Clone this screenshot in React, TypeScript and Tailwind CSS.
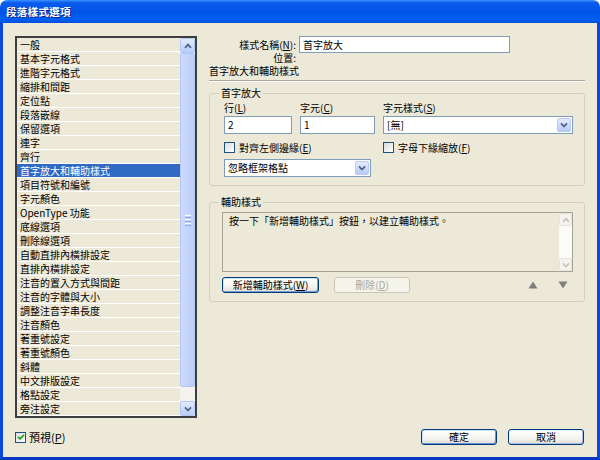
import React from "react";

const items = [
  "一般",
  "基本字元格式",
  "進階字元格式",
  "縮排和間距",
  "定位點",
  "段落嵌線",
  "保留選項",
  "連字",
  "齊行",
  "首字放大和輔助樣式",
  "項目符號和編號",
  "字元顏色",
  "OpenType 功能",
  "底線選項",
  "刪除線選項",
  "自動直排內橫排設定",
  "直排內橫排設定",
  "注音的置入方式與間距",
  "注音的字體與大小",
  "調整注音字串長度",
  "注音顏色",
  "著重號設定",
  "著重號顏色",
  "斜體",
  "中文排版設定",
  "格點設定",
  "旁注設定",
];

function U({ children }: { children: React.ReactNode }) {
  return <span className="underline underline-offset-[1px]">{children}</span>;
}

function Chevron({ up, color }: { up?: boolean; color: string }) {
  return (
    <svg width="8" height="6" viewBox="0 0 8 6">
      <path
        d={up ? "M1 4.8 L4 1.6 L7 4.8" : "M1 1.4 L4 4.6 L7 1.4"}
        fill="none"
        stroke={color}
        strokeWidth="1.7"
      />
    </svg>
  );
}

function Checkbox({ checked }: { checked?: boolean }) {
  return (
    <span className="flex h-[11px] w-[11px] shrink-0 items-center justify-center border border-[#1C5180] bg-[linear-gradient(135deg,#DCDCD7,#FFFFFF)]">
      {checked && (
        <svg width="8" height="8" viewBox="0 0 8 8">
          <path d="M1 3.8 L3.1 5.9 L7 1.8" fill="none" stroke="#21A121" strokeWidth="1.7" />
        </svg>
      )}
    </span>
  );
}

function Combo({ text, width }: { text: string; width: string }) {
  return (
    <div className={`flex h-[18px] items-center border border-[#7F9DB9] bg-white pl-[3px] ${width}`}>
      <span className="flex-1 leading-[16px]">{text}</span>
      <span className="m-[1px] flex h-[14px] w-[14px] items-center justify-center rounded-[2px] border border-[#B8CAF4] bg-[linear-gradient(to_bottom,#E4ECFE,#B7CAF8)]">
        <Chevron color="#4D6185" />
      </span>
    </div>
  );
}

function ScrollBtn({ up }: { up?: boolean }) {
  return (
    <div className="flex h-[15px] w-[15px] shrink-0 items-center justify-center rounded-[2px] border border-[#B4C8F6] bg-[linear-gradient(to_bottom,#E2EAFE,#BBCDF8)]">
      <Chevron up={up} color="#4D6185" />
    </div>
  );
}

function DisabledScrollBtn({ up }: { up?: boolean }) {
  return (
    <div className="flex h-[13px] w-full shrink-0 items-center justify-center rounded-[2px] border border-[#E6E4DA] bg-[#F4F3EE]">
      <Chevron up={up} color="#C6C5BE" />
    </div>
  );
}

function Triangle({ up }: { up?: boolean }) {
  return (
    <svg width="10" height="8" viewBox="0 0 10 8">
      <path d={up ? "M5 0.5 L9.5 7.5 L0.5 7.5 Z" : "M0.5 0.5 L9.5 0.5 L5 7.5 Z"} fill="#7E7E7E" />
    </svg>
  );
}

export default function App() {
  return (
    <div className="flex h-[460px] w-[600px] flex-col bg-white text-[10px] text-black [font-family:'Noto_Sans_CJK_TC','Noto_Sans_CJK_SC',sans-serif]">
      {/* Title bar */}
      <div className="flex h-[23px] shrink-0 items-center rounded-t-[7px] bg-[linear-gradient(to_bottom,#3C92FF_0%,#0A5CEE_12%,#0054E3_50%,#0060F4_85%,#004BD8_100%)] pl-[6px]">
        <span className="text-[10.5px] font-bold leading-[12px] tracking-[0.3px] text-white [text-shadow:1px_1px_0_#0A1F8A]">
          段落樣式選項
        </span>
      </div>

      {/* Body */}
      <div className="flex flex-1 flex-col border-x-[3px] border-b-[3px] border-x-[#0848DB] border-b-[#0A36C4] bg-[#ECE9D8]">
        <div className="flex pl-[12px] pt-[13px]">
          {/* List */}
          <div className="flex h-[382px] w-[182px] border-2 border-[#3E3E3E]">
            <div className="flex flex-1 flex-col">
              {items.map((it, i) => (
                <div
                  key={it}
                  className={
                    i === 9
                      ? "h-[14px] whitespace-nowrap border-b border-white bg-[#316AC5] pl-[3px] leading-[13px] text-white"
                      : "h-[14px] whitespace-nowrap border-b border-white pl-[3px] leading-[13px]"
                  }
                >
                  {it}
                </div>
              ))}
            </div>
            <div className="flex w-[15px] flex-col bg-[#F4F3EE]">
              <ScrollBtn up />
              <div className="flex h-[334px] shrink-0 flex-col items-center justify-center gap-[1px] rounded-[2px] border border-[#B4C8F6] bg-[linear-gradient(to_right,#CCDAFD,#BCCDF8)]">
                <div className="h-[1px] w-[6px] bg-white" />
                <div className="h-[1px] w-[6px] bg-[#8DAAE8]" />
                <div className="h-[1px] w-[6px] bg-white" />
                <div className="h-[1px] w-[6px] bg-[#8DAAE8]" />
                <div className="h-[1px] w-[6px] bg-white" />
                <div className="h-[1px] w-[6px] bg-[#8DAAE8]" />
              </div>
              <div className="flex-1" />
              <ScrollBtn />
            </div>
          </div>

          {/* Right panel */}
          <div className="ml-[12px] flex w-[376px] flex-col">
            <div className="flex items-center">
              <span className="w-[87px] text-right leading-[10px]">
                樣式名稱(<U>N</U>):
              </span>
              <div className="ml-[3px] flex h-[17px] w-[211px] items-center border border-[#7F9DB9] bg-white pl-[3px] leading-[10px]">
                首字放大
              </div>
            </div>
            <div className="flex h-[10px]">
              <span className="w-[87px] text-right leading-[10px]">位置:</span>
            </div>
            <div className="mt-[3px] h-[10px] leading-[10px]">首字放大和輔助樣式</div>
            <div className="mt-[4px] h-[2px] border-t border-b border-t-[#ACA899] border-b-white" />

            {/* Group 1 */}
            <div className="relative mt-[11px] flex flex-col rounded-[3px] border border-[#D0D0BF] pb-[8px] pl-[14px] pr-[11px] pt-[9px]">
              <span className="absolute -top-[6px] left-[9px] bg-[#ECE9D8] px-[2px] leading-[10px]">首字放大</span>
              <div className="flex gap-[8px]">
                <div className="flex w-[68px] flex-col gap-[3px]">
                  <span className="h-[10px] leading-[10px]">
                    行(<U>L</U>)
                  </span>
                  <div className="flex h-[18px] items-center border border-[#7F9DB9] bg-white pl-[3px] leading-[10px]">2</div>
                </div>
                <div className="flex w-[75px] flex-col gap-[3px]">
                  <span className="h-[10px] leading-[10px]">
                    字元(<U>C</U>)
                  </span>
                  <div className="flex h-[18px] items-center border border-[#7F9DB9] bg-white pl-[3px] leading-[10px]">1</div>
                </div>
                <div className="flex w-[190px] flex-col gap-[3px]">
                  <span className="h-[10px] leading-[10px]">
                    字元樣式(<U>S</U>)
                  </span>
                  <Combo text="[無]" width="w-[190px]" />
                </div>
              </div>
              <div className="mt-[8px] flex h-[11px] items-center">
                <div className="flex w-[159px] items-center gap-[4px]">
                  <Checkbox />
                  <span className="leading-[10px]">
                    對齊左側邊緣(<U>E</U>)
                  </span>
                </div>
                <div className="flex items-center gap-[4px]">
                  <Checkbox />
                  <span className="leading-[10px]">
                    字母下緣縮放(<U>F</U>)
                  </span>
                </div>
              </div>
              <div className="mt-[6px]">
                <Combo text="忽略框架格點" width="w-[147px]" />
              </div>
            </div>

            {/* Group 2 */}
            <div className="relative mt-[16px] flex flex-col rounded-[3px] border border-[#D0D0BF] pb-[8px] pl-[12px] pr-[11px] pt-[9px]">
              <span className="absolute -top-[6px] left-[9px] bg-[#ECE9D8] px-[2px] leading-[10px]">輔助樣式</span>
              <div className="flex h-[60px] border border-[#A5A297] bg-[#ECE9D8]">
                <div className="flex-1 pl-[6px] pt-[3px] leading-[10px]">按一下「新增輔助樣式」按鈕，以建立輔助樣式。</div>
                <div className="flex w-[13px] flex-col bg-[#FBFBF8]">
                  <DisabledScrollBtn up />
                  <div className="flex-1" />
                  <DisabledScrollBtn />
                </div>
              </div>
              <div className="mt-[5px] flex h-[16px] items-center">
                <div className="flex h-[16px] w-[97px] items-center justify-center rounded-[3px] border border-[#003C74] bg-[linear-gradient(to_bottom,#FFFFFF,#F4F4F0_60%,#E4E1D8_90%,#D6D0C5)] leading-[10px] shadow-[inset_1px_1px_0_#CEE7FF,inset_-1px_-1px_0_#7D9BE0]">
                  新增輔助樣式(<U>W</U>)
                </div>
                <div className="ml-[15px] flex h-[16px] w-[76px] items-center justify-center rounded-[3px] border border-[#C9C7BA] bg-[#F5F4EA] leading-[10px] text-[#ACA899]">
                  刪除(<U>D</U>)
                </div>
                <div className="ml-auto flex items-center gap-[10px]">
                  <div className="flex w-[20px] justify-center">
                    <Triangle up />
                  </div>
                  <div className="flex w-[20px] justify-center">
                    <Triangle />
                  </div>
                </div>
              </div>
            </div>
          </div>
        </div>

        {/* Bottom row */}
        <div className="mt-[11px] flex h-[16px] items-center pl-[12px] pr-[13px]">
          <div className="flex items-center gap-[3px]">
            <Checkbox checked />
            <span className="text-[11px] leading-[11px]">
              預視(<U>P</U>)
            </span>
          </div>
          <div className="ml-auto flex gap-[11px]">
            <div className="flex h-[16px] w-[76px] items-center justify-center rounded-[3px] border border-[#003C74] bg-[linear-gradient(to_bottom,#FFFFFF,#F4F4F0_60%,#E4E1D8_90%,#D6D0C5)] leading-[10px] shadow-[inset_1px_1px_0_#CEE7FF,inset_-1px_-1px_0_#6B8FE0]">
              確定
            </div>
            <div className="flex h-[16px] w-[76px] items-center justify-center rounded-[3px] border border-[#003C74] bg-[linear-gradient(to_bottom,#FFFFFF,#F4F4F0_60%,#E4E1D8_90%,#D6D0C5)] leading-[10px] shadow-[inset_1px_1px_0_#E8F1FF,inset_-1px_-1px_0_#A9BDE8]">
              取消
            </div>
          </div>
        </div>
      </div>
    </div>
  );
}
